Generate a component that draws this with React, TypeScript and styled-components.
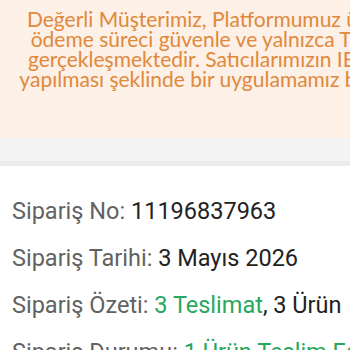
import React from "react";
import styled, { createGlobalStyle } from "styled-components";

const Global = createGlobalStyle`
  html, body { margin: 0; padding: 0; background: #ffffff; }
  body { overflow: hidden; width: 350px; }
  #root { width: 350px; overflow: hidden; }
`;

const Page = styled.div`
  width: 350px;
  overflow: hidden;
  background: #ffffff;
`;

const Banner = styled.div`
  width: 534px;
  background: #fdf0e6;
  padding: 9px 0 49px;
  text-align: center;
  font-family: Lato, "Noto Sans", sans-serif;
  font-size: 21px;
  font-weight: 400;
  line-height: 20px;
  color: #e0893c;
  white-space: nowrap;
`;

const BannerLine = styled.div``;

const Divider = styled.div`
  height: 23px;
  background: #f4f4f4;
  border-bottom: 5px solid #ececec;
`;

const Details = styled.div`
  padding: 22px 0 0 12px;
  font-family: Roboto, "Noto Sans", sans-serif;
  font-size: 23.5px;
  line-height: 47px;
  white-space: nowrap;
`;

const Row = styled.div`
  color: #222222;
`;

const Label = styled.span`
  color: #626262;
`;

const Green = styled.span`
  color: #27a85c;
`;

export default function App() {
  return (
    <Page>
      <Global />
      <Banner>
        <BannerLine>Değerli Müşterimiz, Platformumuz üzerinden yapılan</BannerLine>
        <BannerLine>ödeme süreci güvenle ve yalnızca Trendyol üzerinde</BannerLine>
        <BannerLine>gerçekleşmektedir. Satıcılarımızın IBAN numarası ile,</BannerLine>
        <BannerLine>yapılması şeklinde bir uygulamamız bulunmamaktadır.&nbsp;</BannerLine>
      </Banner>
      <Divider />
      <Details>
        <Row>
          <Label>Sipariş No: </Label>11196837963
        </Row>
        <Row>
          <Label>Sipariş Tarihi: </Label>3 Mayıs 2026
        </Row>
        <Row>
          <Label>Sipariş Özeti: </Label>
          <Green>3 Teslimat</Green>, 3 Ürün
        </Row>
        <Row>
          <Label>Sipariş Durumu: </Label>
          <Green>1 Ürün Teslim Edildi</Green>
        </Row>
      </Details>
    </Page>
  );
}
